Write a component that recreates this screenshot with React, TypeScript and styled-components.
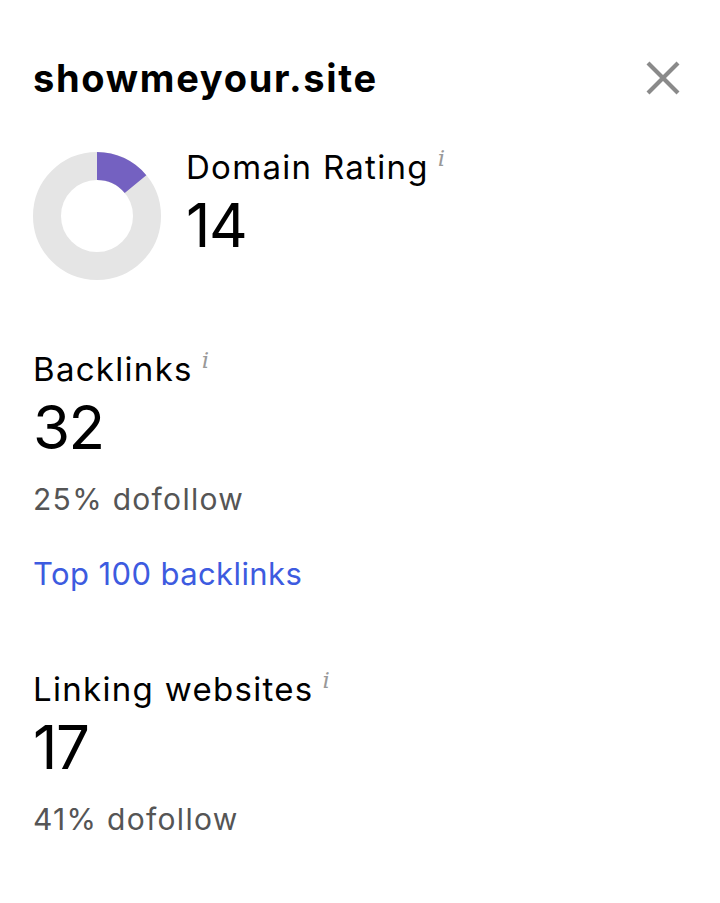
import React from 'react'
import styled, { createGlobalStyle } from 'styled-components'

const GlobalStyle = createGlobalStyle`
  body {
    margin: 0;
    background: #fff;
    font-family: Inter, "Noto Sans", sans-serif;
    color: #000;
  }
`

const Panel = styled.div`
  width: 720px;
  min-height: 903px;
  box-sizing: border-box;
  padding: 52px 38px 0 33px;
`

const Header = styled.div`
  display: flex;
  justify-content: space-between;
  align-items: center;
`

const Title = styled.h1`
  margin: 0;
  font-size: 38px;
  font-weight: 700;
  letter-spacing: 1.7px;
  line-height: 52px;
`

const CloseButton = styled.button`
  border: 0;
  background: none;
  padding: 0;
  width: 38px;
  height: 38px;
  display: flex;
  align-items: center;
  justify-content: center;
  cursor: pointer;
`

const RatingRow = styled.div`
  display: flex;
  align-items: flex-start;
  gap: 25px;
  margin-top: 48px;
`

const Donut = styled.svg`
  flex-shrink: 0;
`

const RatingText = styled.div`
  display: flex;
  flex-direction: column;
  margin-top: -5px;
`

const Section = styled.div<{ $top: number }>`
  margin-top: ${p => p.$top}px;
  display: flex;
  flex-direction: column;
  align-items: flex-start;
`

const Label = styled.div`
  font-size: 33px;
  line-height: 40px;
  font-weight: 400;
  letter-spacing: 1.3px;
  display: flex;
  align-items: flex-start;
`

const Info = styled.span`
  font-family: "DejaVu Serif", serif;
  font-style: italic;
  font-size: 23px;
  line-height: 22px;
  letter-spacing: 0;
  color: #999;
  margin-left: 9px;
  margin-top: 0;
`

const Value = styled.div`
  font-size: 60px;
  line-height: 64px;
  font-weight: 400;
  letter-spacing: -1.5px;
  margin-top: 6px;
`

const Sub = styled.div`
  font-size: 30px;
  line-height: 40px;
  letter-spacing: 1.3px;
  color: #555;
  margin-top: 20px;
`

const TopLink = styled.a`
  margin-top: 35px;
  font-size: 31px;
  line-height: 40px;
  letter-spacing: 0.4px;
  color: #3d5be0;
  text-decoration: none;
`

const polar = (cx: number, cy: number, r: number, deg: number) => {
  const a = ((deg - 90) * Math.PI) / 180
  return [cx + r * Math.cos(a), cy + r * Math.sin(a)]
}

const DonutChart = ({ value }: { value: number }) => {
  const deg = (value / 100) * 360
  const [x1, y1] = polar(64, 64, 64, 0)
  const [x2, y2] = polar(64, 64, 64, deg)
  const [x3, y3] = polar(64, 64, 36, deg)
  const [x4, y4] = polar(64, 64, 36, 0)
  const large = deg > 180 ? 1 : 0
  return (
    <Donut width="128" height="128" viewBox="0 0 128 128">
      <circle cx="64" cy="64" r="50" fill="none" stroke="#e5e5e5" strokeWidth="28" />
      <path
        d={`M${x1} ${y1} A64 64 0 ${large} 1 ${x2} ${y2} L${x3} ${y3} A36 36 0 ${large} 0 ${x4} ${y4} Z`}
        fill="#7461c1"
      />
    </Donut>
  )
}

export default function App() {
  return (
    <>
      <GlobalStyle />
      <Panel>
        <Header>
          <Title>showmeyour.site</Title>
          <CloseButton aria-label="Close">
            <svg width="36" height="36" viewBox="0 0 36 36">
              <path d="M3 3L33 33M33 3L3 33" stroke="#8a8a8a" strokeWidth="4.2" />
            </svg>
          </CloseButton>
        </Header>

        <RatingRow>
          <DonutChart value={14} />
          <RatingText>
            <Label>
              Domain Rating<Info>i</Info>
            </Label>
            <Value>14</Value>
          </RatingText>
        </RatingRow>

        <Section $top={69}>
          <Label>
            Backlinks<Info>i</Info>
          </Label>
          <Value>32</Value>
          <Sub>25% dofollow</Sub>
          <TopLink href="#">Top 100 backlinks</TopLink>
        </Section>

        <Section $top={75}>
          <Label>
            Linking websites<Info>i</Info>
          </Label>
          <Value>17</Value>
          <Sub>41% dofollow</Sub>
        </Section>
      </Panel>
    </>
  )
}
